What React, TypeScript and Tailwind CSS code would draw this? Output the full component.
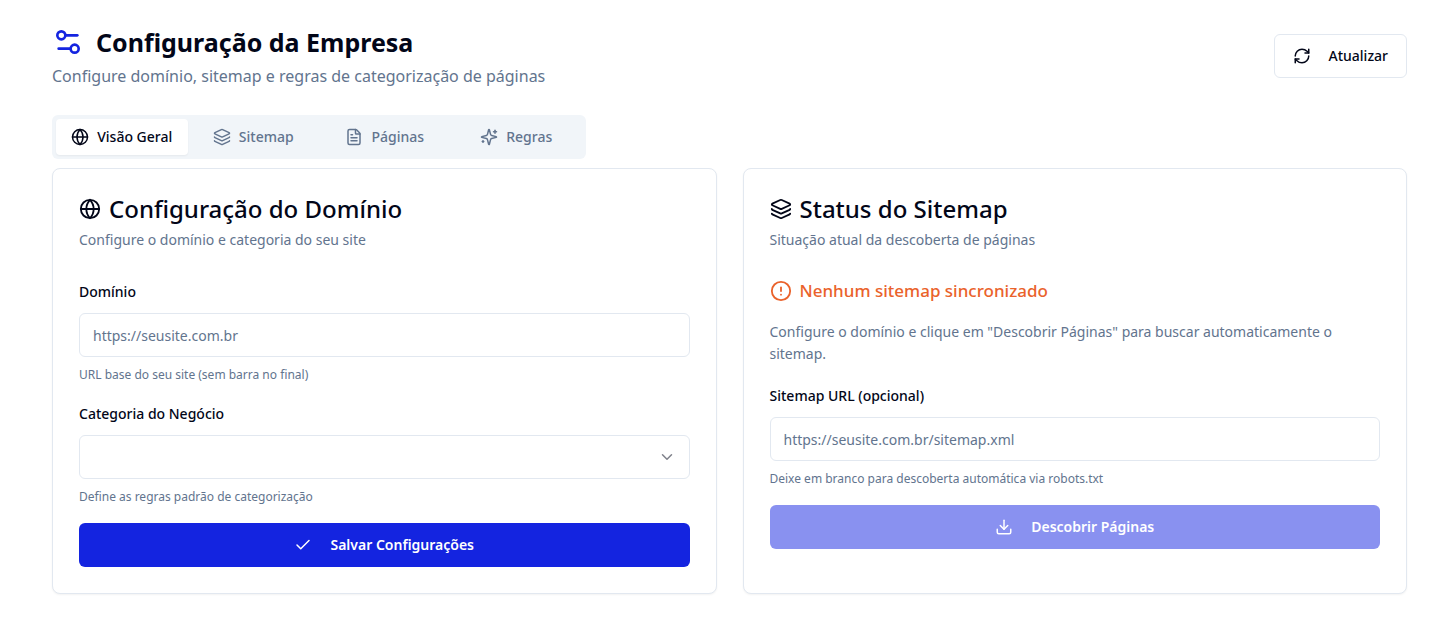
import type { ReactNode } from "react";
import {
  Check,
  ChevronDown,
  CircleAlert,
  Download,
  FileText,
  Globe,
  Layers,
  RefreshCw,
  Settings2,
} from "lucide-react";

const Sparkles = ({ className }: { className?: string }) => (
  <svg
    viewBox="0 0 24 24"
    fill="none"
    stroke="currentColor"
    strokeWidth={2}
    strokeLinecap="round"
    strokeLinejoin="round"
    className={className}
  >
    <path d="M9.937 15.5A2 2 0 0 0 8.5 14.063l-6.135-1.582a.5.5 0 0 1 0-.962L8.5 9.936A2 2 0 0 0 9.937 8.5l1.582-6.135a.5.5 0 0 1 .963 0L14.063 8.5A2 2 0 0 0 15.5 9.937l6.135 1.581a.5.5 0 0 1 0 .964L15.5 14.063a2 2 0 0 0-1.437 1.437l-1.582 6.135a.5.5 0 0 1-.963 0z" />
    <path d="M20 3v4" />
    <path d="M22 5h-4" />
    <path d="M4 17v2" />
    <path d="M5 18H3" />
  </svg>
);

const tabs = [
  { label: "Visão Geral", icon: Globe, active: true },
  { label: "Sitemap", icon: Layers, active: false },
  { label: "Páginas", icon: FileText, active: false },
  { label: "Regras", icon: Sparkles, active: false },
];

const fieldClass =
  "h-11 w-full rounded-md border border-slate-200 bg-white px-[13px] text-sm placeholder:text-slate-500";

const Card = ({
  icon,
  title,
  description,
  children,
}: {
  icon: ReactNode;
  title: string;
  description: string;
  children: ReactNode;
}) => (
  <section className="rounded-lg border border-slate-200 bg-white p-[26px] shadow-xs">
    <div className="mb-7">
      <h2 className="flex items-center gap-2 text-2xl leading-7 font-medium">
        {icon}
        {title}
      </h2>
      <p className="mt-1.5 text-sm leading-[22px] text-slate-500">{description}</p>
    </div>
    <div className="flex flex-col gap-[18px]">{children}</div>
  </section>
);

const Field = ({
  id,
  label,
  hint,
  children,
}: {
  id: string;
  label: string;
  hint: string;
  children: ReactNode;
}) => (
  <div>
    <label htmlFor={id} className="mb-2 block text-sm leading-[26px] font-medium">
      {label}
    </label>
    {children}
    <p className="mt-2.5 text-xs leading-4 text-slate-500">{hint}</p>
  </div>
);

const App = () => {
  return (
    <main className="pt-[22px] pr-[27px] pb-6 pl-[52px] font-['Noto_Sans',sans-serif] text-slate-950">
      <header className="flex items-center justify-between">
        <div>
          <h1 className="flex items-center gap-3 text-[25px] leading-10 font-bold">
            <Settings2 className="size-8 text-[#1424e0]" />
            Configuração da Empresa
          </h1>
          <p className="text-base leading-7 text-slate-500">
            Configure domínio, sitemap e regras de categorização de páginas
          </p>
        </div>
        <button className="flex h-11 items-center gap-[18px] rounded-md border border-slate-200 px-[18px] text-sm font-medium">
          <RefreshCw className="size-[18px]" />
          Atualizar
        </button>
      </header>

      <div
        role="tablist"
        className="mt-[25px] grid h-11 w-[534px] grid-cols-4 rounded-md bg-slate-100 p-1 text-sm font-medium"
      >
        {tabs.map(({ label, icon: Icon, active }) => (
          <button
            key={label}
            role="tab"
            aria-selected={active}
            className={
              active
                ? "flex items-center justify-center gap-2 rounded-sm bg-white shadow-xs"
                : "flex items-center justify-center gap-2 rounded-sm text-slate-500"
            }
          >
            <Icon className="size-[18px]" />
            {label}
          </button>
        ))}
      </div>

      <div className="mt-[9px] grid grid-cols-2 gap-[26px]">
        <Card
          icon={<Globe className="size-[22px]" />}
          title="Configuração do Domínio"
          description="Configure o domínio e categoria do seu site"
        >
          <Field id="domain" label="Domínio" hint="URL base do seu site (sem barra no final)">
            <input id="domain" type="url" placeholder="https://seusite.com.br" className={fieldClass} />
          </Field>
          <Field id="category" label="Categoria do Negócio" hint="Define as regras padrão de categorização">
            <div className="relative">
              <select id="category" defaultValue="" className={`${fieldClass} appearance-none`}>
                <option value=""></option>
              </select>
              <ChevronDown className="pointer-events-none absolute top-[13px] right-3.5 size-[18px] text-slate-950/50" />
            </div>
          </Field>
          <button className="flex h-11 w-full items-center justify-center gap-[18px] rounded-md bg-[#1424e0] text-sm font-semibold text-white">
            <Check className="size-[18px]" />
            Salvar Configurações
          </button>
        </Card>

        <Card
          icon={<Layers className="size-[22px]" />}
          title="Status do Sitemap"
          description="Situação atual da descoberta de páginas"
        >
          <div className="flex items-center gap-2 text-[17px] leading-6 font-medium text-[#ea622b]">
            <CircleAlert className="size-[22px]" />
            Nenhum sitemap sincronizado
          </div>
          <p className="text-sm leading-[22px] text-slate-500">
            Configure o domínio e clique em "Descobrir Páginas" para buscar automaticamente o sitemap.
          </p>
          <Field
            id="sitemap-url"
            label="Sitemap URL (opcional)"
            hint="Deixe em branco para descoberta automática via robots.txt"
          >
            <input
              id="sitemap-url"
              type="url"
              placeholder="https://seusite.com.br/sitemap.xml"
              className={fieldClass}
            />
          </Field>
          <button
            disabled
            className="flex h-11 w-full items-center justify-center gap-[18px] rounded-md bg-[#8991f0] text-sm font-semibold text-white"
          >
            <Download className="size-[18px]" />
            Descobrir Páginas
          </button>
        </Card>
      </div>
    </main>
  );
};

export default App;
